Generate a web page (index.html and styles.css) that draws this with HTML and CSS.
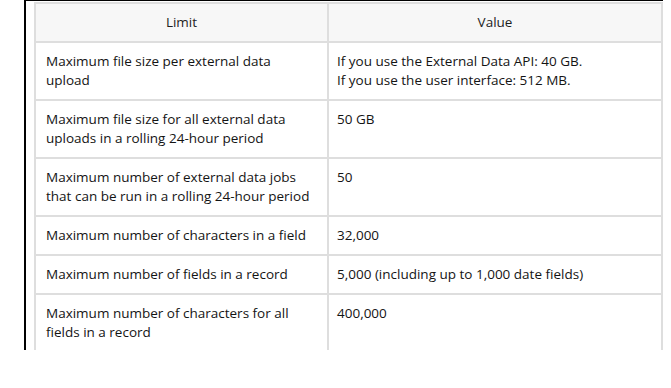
FILE: index.html
```html
<!DOCTYPE html>
<html>
<head>
<meta charset="utf-8">
<link rel="stylesheet" href="styles.css">
</head>
<body>
<div class="frame">
  <table class="limits">
    <thead>
      <tr><th class="c1">Limit</th><th class="c2">Value</th></tr>
    </thead>
    <tbody>
      <tr><td>Maximum file size per external data<br>upload</td><td>If you use the External Data API: 40 GB.<br>If you use the user interface: 512 MB.</td></tr>
      <tr><td>Maximum file size for all external data<br>uploads in a rolling 24-hour period</td><td>50 GB</td></tr>
      <tr><td>Maximum number of external data jobs<br>that can be run in a rolling 24-hour period</td><td>50</td></tr>
      <tr><td>Maximum number of characters in a field</td><td>32,000</td></tr>
      <tr><td>Maximum number of fields in a record</td><td>5,000 (including up to 1,000 date fields)</td></tr>
      <tr><td>Maximum number of characters for all<br>fields in a record</td><td>400,000</td></tr>
    </tbody>
  </table>
</div>
</body>
</html>
```
FILE: styles.css
```css
html, body {
  margin: 0;
  padding: 0;
  background: #fff;
}
body {
  font-family: "Open Sans", "Noto Sans", sans-serif;
  font-size: 13.5px;
  color: #141414;
}
.frame {
  margin-left: 24px;
  width: 639px;
  height: 350px;
  border-left: 2px solid #000;
  border-top: 1px solid #000;
  padding: 1px 0 0 8px;
  box-sizing: border-box;
}
.limits {
  border-collapse: collapse;
  width: 629px;
  table-layout: fixed;
  white-space: nowrap;
}
.limits th, .limits td {
  border: 2px solid #dedede;
  padding: 9px 10px 9px 10px;
  line-height: 19px;
  text-align: left;
  vertical-align: top;
}
.limits td + td {
  padding-left: 8px;
}
.limits th {
  background: #f7f7f7;
  font-weight: normal;
  text-align: center;
  color: #1e1e1e;
}
.c1 { width: 271px; }
.c2 { width: auto; }
```
